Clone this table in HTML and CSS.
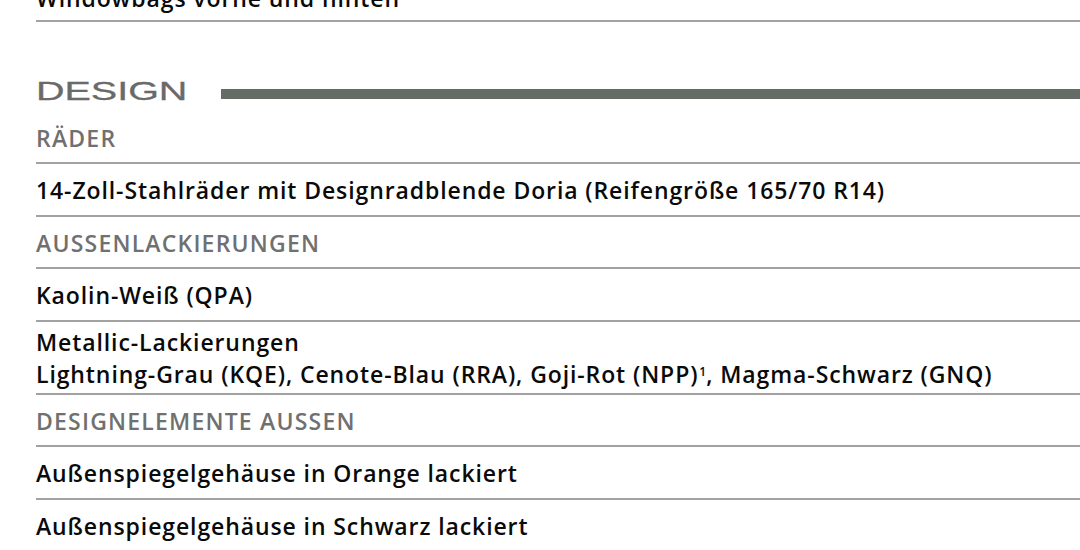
FILE: index.html
```html
<!DOCTYPE html>
<html lang="de">
<head>
<meta charset="utf-8">
<title>Design</title>
<link rel="stylesheet" href="styles.css">
</head>
<body>
<div class="page">
  <div class="row row--first">Windowbags vorne und hinten</div>

  <div class="section-head">
    <div class="title-box"><span class="title">DESIGN</span></div>
    <div class="bar"></div>
  </div>

  <div class="row row--label">RÄDER</div>
  <div class="row">14-Zoll-Stahlräder mit Designradblende Doria (Reifengröße 165/70 R14)</div>
  <div class="row row--label">AUSSENLACKIERUNGEN</div>
  <div class="row">Kaolin-Weiß (QPA)</div>
  <div class="row row--multi">Metallic-Lackierungen<br>Lightning-Grau (KQE), Cenote-Blau (RRA), Goji-Rot (NPP)<span class="sup">1</span>, Magma-Schwarz (GNQ)</div>
  <div class="row row--label">DESIGNELEMENTE AUSSEN</div>
  <div class="row">Außenspiegelgehäuse in Orange lackiert</div>
  <div class="row">Außenspiegelgehäuse in Schwarz lackiert</div>
</div>
</body>
</html>
```

FILE: styles.css
```css
html, body {
  margin: 0;
  padding: 0;
  background: #ffffff;
}

body {
  overflow: hidden;
  font-family: "Open Sans", "Noto Sans", sans-serif;
  color: #0a0a0a;
}

.page {
  margin-top: -26px;
  padding-left: 36px;
}

.row {
  box-sizing: border-box;
  height: 52.5px;
  padding-top: 11px;
  font-size: 23px;
  line-height: 30px;
  font-weight: 600;
  letter-spacing: 0.9px;
  white-space: nowrap;
  border-bottom: 2px solid #a2a2a2;
}

.row--first {
  height: 48px;
  padding-top: 8.5px;
}

.row--label {
  color: #707070;
  letter-spacing: 1.2px;
}

.row--multi {
  height: 73px;
  padding-top: 5.5px;
  line-height: 31.5px;
}

.sup {
  font-size: 12px;
  letter-spacing: 0;
  vertical-align: 7px;
  line-height: 0;
  margin-left: 1px;
}

.section-head {
  display: flex;
  align-items: flex-end;
  height: 26px;
  margin-top: 56.5px;
  margin-bottom: 7px;
}

.title-box {
  width: 150px;
  flex: none;
}

.title {
  display: inline-block;
  font-family: "Liberation Sans", Arial, sans-serif;
  font-size: 26.5px;
  line-height: 26px;
  font-weight: 400;
  color: #6a6a6a;
  transform: scaleX(1.49);
  transform-origin: left center;
  -webkit-text-stroke: 0.3px #6a6a6a;
}

.bar {
  flex: 1;
  height: 10px;
  margin-left: 35px;
  margin-bottom: 5.5px;
  background: #646c65;
}
```
